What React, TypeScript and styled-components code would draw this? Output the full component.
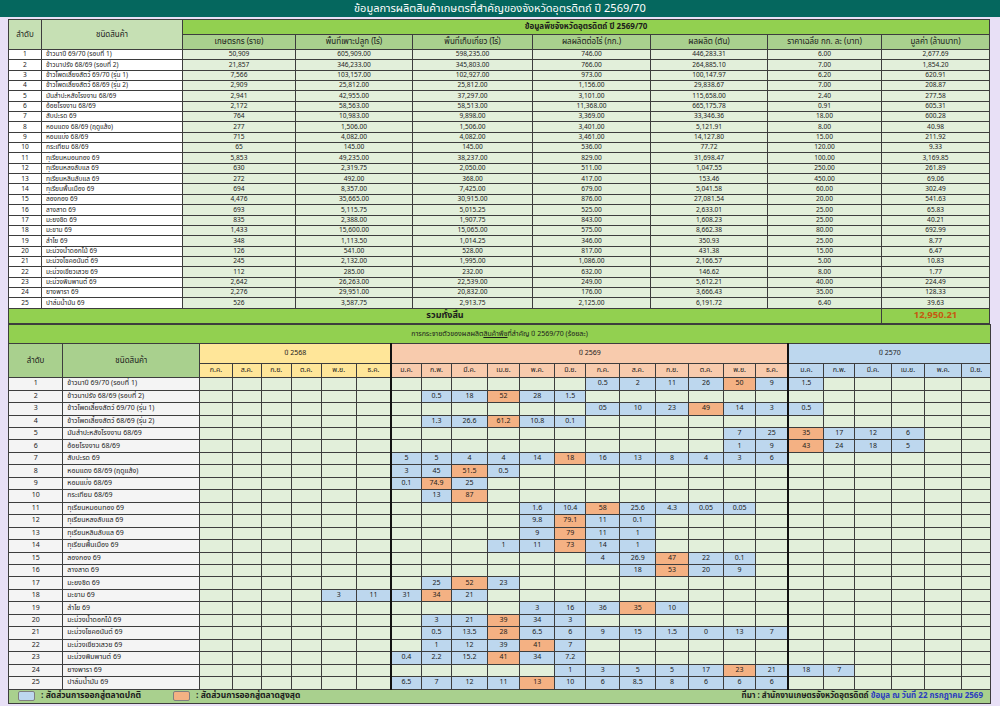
import React from 'react';
import styled, { createGlobalStyle } from 'styled-components';

const FONT = `Tahoma, "Noto Sans Thai", "Leelawadee UI", "Liberation Sans", "DejaVu Sans", sans-serif`;

const Global = createGlobalStyle`
  html, body { margin: 0; padding: 0; background: #e8e0f6; }
  body { font-family: ${FONT}; color: #1c1c1c; }
`;

const Page = styled.div`
  width: 1000px;
  height: 706px;
  overflow: hidden;
  display: flex;
  flex-direction: column;
  background: #e8e0f6;
`;

const TitleBar = styled.header`
  height: 17px;
  flex: none;
  background: #05675e;
  color: #fff;
  font-size: 11px;
  font-weight: 400;
  display: flex;
  align-items: center;
  justify-content: center;
  line-height: 1;
`;

const Content = styled.main`
  padding: 2px 10px 0 8px;
  display: flex;
  flex-direction: column;
`;

const Table = styled.table<{ $w: number; $fs: number }>`
  width: ${(p) => p.$w}px;
  table-layout: fixed;
  border-collapse: collapse;
  font-size: ${(p) => p.$fs}px;
  line-height: 1;
`;

const Cell = styled.td<{ $bg?: string; $align?: string; $bold?: boolean; $thick?: boolean; $fs?: number }>`
  border: 1px solid #3d3d3d;
  ${(p) => (p.$thick ? 'border-left: 2px solid #111;' : '')}
  background: ${(p) => p.$bg || 'transparent'};
  text-align: ${(p) => p.$align || 'center'};
  font-weight: ${(p) => (p.$bold ? 700 : 400)};
  ${(p) => (p.$fs ? `font-size: ${p.$fs}px;` : '')}
  padding: ${(p) => (p.$align === 'left' ? '0 0 0 4px' : '0')};
  white-space: nowrap;
  overflow: hidden;
  vertical-align: middle;
`;

const Row = styled.tr<{ $h: number }>`
  height: ${(p) => p.$h}px;
`;

const TotalValue = styled.span`
  color: #c55a11;
  font-size: 9.5px;
  font-weight: 700;
`;

const Underline = styled.span`
  text-decoration: underline;
`;

const LegendBar = styled.div`
  display: flex;
  align-items: center;
  height: 100%;
  padding: 0 7px 0 9px;
  font-size: 8.5px;
  font-weight: 700;
`;

const LegendItem = styled.div`
  display: flex;
  align-items: center;
  gap: 6px;
  margin-right: 32px;
`;

const Swatch = styled.span<{ $c: string }>`
  display: inline-block;
  width: 15px;
  height: 8px;
  border-radius: 2px;
  border: 1px solid #7f7f7f;
  background: ${(p) => p.$c};
`;

const Source = styled.div`
  margin-left: auto;
  font-size: 8px;
`;

const Blue = styled.span`
  color: #2c3cc0;
`;

const names = [
  'ข้าวนาปี 69/70 (รอบที่ 1)',
  'ข้าวนาปรัง 68/69 (รอบที่ 2)',
  'ข้าวโพดเลี้ยงสัตว์ 69/70 (รุ่น 1)',
  'ข้าวโพดเลี้ยงสัตว์ 68/69 (รุ่น 2)',
  'มันสำปะหลังโรงงาน 68/69',
  'อ้อยโรงงาน 68/69',
  'สับปะรด 69',
  'หอมแดง 68/69 (ฤดูแล้ง)',
  'หอมแบ่ง 68/69',
  'กระเทียม 68/69',
  'ทุเรียนหมอนทอง 69',
  'ทุเรียนหลงลับแล 69',
  'ทุเรียนหลินลับแล 69',
  'ทุเรียนพื้นเมือง 69',
  'ลองกอง 69',
  'ลางสาด 69',
  'มะยงชิด 69',
  'มะขาม 69',
  'ลำไย 69',
  'มะม่วงน้ำดอกไม้ 69',
  'มะม่วงโชคอนันต์ 69',
  'มะม่วงเขียวเสวย 69',
  'มะม่วงพิมพานต์ 69',
  'ยางพารา 69',
  'ปาล์มน้ำมัน 69',
];

const topData: string[][] = [
  ['50,909', '605,909.00', '598,235.00', '746.00', '446,283.31', '6.00', '2,677.69'],
  ['21,857', '346,233.00', '345,803.00', '766.00', '264,885.10', '7.00', '1,854.20'],
  ['7,566', '103,157.00', '102,927.00', '973.00', '100,147.97', '6.20', '620.91'],
  ['2,909', '25,812.00', '25,812.00', '1,156.00', '29,838.67', '7.00', '208.87'],
  ['2,941', '42,955.00', '37,297.00', '3,101.00', '115,658.00', '2.40', '277.58'],
  ['2,172', '58,563.00', '58,513.00', '11,368.00', '665,175.78', '0.91', '605.31'],
  ['764', '10,983.00', '9,898.00', '3,369.00', '33,346.36', '18.00', '600.28'],
  ['277', '1,506.00', '1,506.00', '3,401.00', '5,121.91', '8.00', '40.98'],
  ['715', '4,082.00', '4,082.00', '3,461.00', '14,127.80', '15.00', '211.92'],
  ['65', '145.00', '145.00', '536.00', '77.72', '120.00', '9.33'],
  ['5,853', '49,235.00', '38,237.00', '829.00', '31,698.47', '100.00', '3,169.85'],
  ['630', '2,319.75', '2,050.00', '511.00', '1,047.55', '250.00', '261.89'],
  ['272', '492.00', '368.00', '417.00', '153.46', '450.00', '69.06'],
  ['694', '8,357.00', '7,425.00', '679.00', '5,041.58', '60.00', '302.49'],
  ['4,476', '35,665.00', '30,915.00', '876.00', '27,081.54', '20.00', '541.63'],
  ['693', '5,115.75', '5,015.25', '525.00', '2,633.01', '25.00', '65.83'],
  ['835', '2,388.00', '1,907.75', '843.00', '1,608.23', '25.00', '40.21'],
  ['1,433', '15,600.00', '15,065.00', '575.00', '8,662.38', '80.00', '692.99'],
  ['348', '1,113.50', '1,014.25', '346.00', '350.93', '25.00', '8.77'],
  ['126', '541.00', '528.00', '817.00', '431.38', '15.00', '6.47'],
  ['245', '2,132.00', '1,995.00', '1,086.00', '2,166.57', '5.00', '10.83'],
  ['112', '285.00', '232.00', '632.00', '146.62', '8.00', '1.77'],
  ['2,642', '26,263.00', '22,539.00', '249.00', '5,612.21', '40.00', '224.49'],
  ['2,276', '29,951.00', '20,832.00', '176.00', '3,666.43', '35.00', '128.33'],
  ['526', '3,587.75', '2,913.75', '2,125.00', '6,191.72', '6.40', '39.63'],
];

const topHeads = [
  'เกษตรกร (ราย)',
  'พื้นที่เพาะปลูก (ไร่)',
  'พื้นที่เก็บเกี่ยว (ไร่)',
  'ผลผลิตต่อไร่ (กก.)',
  'ผลผลิต (ตัน)',
  'ราคาเฉลี่ย กก. ละ (บาท)',
  'มูลค่า (ล้านบาท)',
];
const topCols = [33, 141, 113, 117, 120, 118, 117, 114, 108];

// distribution: "col:value" with * for peak
const dist: string[] = [
  '12:0.5 13:2 14:11 15:26 16:50* 17:9 18:1.5',
  '7:0.5 8:18 9:52* 10:28 11:1.5',
  '12:05 13:10 14:23 15:49* 16:14 17:3 18:0.5',
  '7:1.3 8:26.6 9:61.2* 10:10.8 11:0.1',
  '16:7 17:25 18:35* 19:17 20:12 21:6',
  '16:1 17:9 18:43* 19:24 20:18 21:5',
  '6:5 7:5 8:4 9:4 10:14 11:18* 12:16 13:13 14:8 15:4 16:3 17:6',
  '6:3 7:45 8:51.5* 9:0.5',
  '6:0.1 7:74.9* 8:25',
  '7:13 8:87*',
  '10:1.6 11:10.4 12:58* 13:25.6 14:4.3 15:0.05 16:0.05',
  '10:9.8 11:79.1* 12:11 13:0.1',
  '10:9 11:79* 12:11 13:1',
  '9:1 10:11 11:73* 12:14 13:1',
  '12:4 13:26.9 14:47* 15:22 16:0.1',
  '13:18 14:53* 15:20 16:9',
  '7:25 8:52* 9:23',
  '4:3 5:11 6:31 7:34* 8:21',
  '10:3 11:16 12:36 13:35* 14:10',
  '7:3 8:21 9:39* 10:34 11:3',
  '7:0.5 8:13.5 9:28* 10:6.5 11:6 12:9 13:15 14:1.5 15:0 16:13 17:7',
  '7:1 8:12 9:39 10:41* 11:7',
  '6:0.4 7:2.2 8:15.2 9:41* 10:34 11:7.2',
  '11:1 12:3 13:5 14:5 15:17 16:23* 17:21 18:18 19:7',
  '6:6.5 7:7 8:12 9:11 10:13* 11:10 12:6 13:8.5 14:8 15:6 16:6 17:6',
];

const parseDist = (s: string) => {
  const m: Record<number, { v: string; peak: boolean }> = {};
  s.split(' ').forEach((tok) => {
    const [c, v] = tok.split(':');
    m[Number(c)] = { v: v.replace('*', ''), peak: v.endsWith('*') };
  });
  return m;
};

const m6a = ['ก.ค.', 'ส.ค.', 'ก.ย.', 'ต.ค.', 'พ.ย.', 'ธ.ค.'];
const m6b = ['ม.ค.', 'ก.พ.', 'มี.ค.', 'เม.ย.', 'พ.ค.', 'มิ.ย.'];
const months = [...m6a, ...m6b, ...m6a, ...m6b];
const monthBg = (i: number) => (i < 6 ? '#ffe699' : i < 18 ? '#f8cbad' : '#bdd7ee');
const botCols = [
  54.3, 137,
  32.4, 29, 30, 30, 35, 35,
  30, 30.6, 35.4, 32.6, 35, 31, 34, 36, 32.7, 35, 32.3, 32.7,
  35.3, 31, 36.4, 33.6, 37, 28.7,
];

const TopTable = () => (
  <Table $w={981} $fs={6.6}>
    <colgroup>
      {topCols.map((w, i) => (
        <col key={i} style={{ width: w }} />
      ))}
    </colgroup>
    <thead>
      <Row $h={15}>
        <Cell as="th" rowSpan={2} $bg="#c6e0b4" $fs={8}>ลำดับ</Cell>
        <Cell as="th" rowSpan={2} $bg="#c6e0b4" $fs={8}>ชนิดสินค้า</Cell>
        <Cell as="th" colSpan={7} $bg="#92d050" $bold $fs={8}>ข้อมูลพืชจังหวัดอุตรดิตถ์ ปี 2569/70</Cell>
      </Row>
      <Row $h={15}>
        {topHeads.map((h) => (
          <Cell as="th" key={h} $bg="#a9d08e" $fs={8}>{h}</Cell>
        ))}
      </Row>
    </thead>
    <tbody>
      {topData.map((r, i) => (
        <Row $h={10.35} key={i}>
          <Cell $bg="#fff">{i + 1}</Cell>
          <Cell $bg="#fff" $align="left">{names[i]}</Cell>
          {r.map((v, j) => (
            <Cell key={j} $bg="#e2efda">{v}</Cell>
          ))}
        </Row>
      ))}
      <Row $h={15.6}>
        <Cell colSpan={8} $bg="#92d050" $bold $fs={9}>รวมทั้งสิ้น</Cell>
        <Cell $bg="#92d050"><TotalValue>12,950.21</TotalValue></Cell>
      </Row>
    </tbody>
  </Table>
);

const BottomTable = () => (
  <Table $w={982} $fs={7}>
    <colgroup>
      {botCols.map((w, i) => (
        <col key={i} style={{ width: w }} />
      ))}
    </colgroup>
    <thead>
      <Row $h={19}>
        <Cell as="th" colSpan={26} $bg="#92d050">
          การกระจายตัวของผลผลิต<Underline>สินค้าพืช</Underline>ที่สำคัญ ปี 2569/70 (ร้อยละ)
        </Cell>
      </Row>
      <Row $h={19.5}>
        <Cell as="th" rowSpan={2} $bg="#a9d08e" $fs={8}>ลำดับ</Cell>
        <Cell as="th" rowSpan={2} $bg="#a9d08e" $fs={8}>ชนิดสินค้า</Cell>
        <Cell as="th" colSpan={6} $bg="#ffe699">ปี 2568</Cell>
        <Cell as="th" colSpan={12} $bg="#f8cbad" $thick>ปี 2569</Cell>
        <Cell as="th" colSpan={6} $bg="#bdd7ee" $thick>ปี 2570</Cell>
      </Row>
      <Row $h={14.5}>
        {months.map((m, i) => (
          <Cell as="th" key={i} $bg={monthBg(i)} $thick={i === 6 || i === 18}>
            {m}
          </Cell>
        ))}
      </Row>
    </thead>
    <tbody>
      {dist.map((s, i) => {
        const d = parseDist(s);
        return (
          <Row $h={12.46} key={i}>
            <Cell $bg="#f4f4f4">{i + 1}</Cell>
            <Cell $bg="#f4f4f4" $align="left">{names[i]}</Cell>
            {months.map((_, c) => {
              const e = d[c];
              const bg = e ? (e.peak ? '#f4b183' : '#bdd7ee') : '#e2efda';
              return (
                <Cell key={c} $bg={bg} $thick={c === 6 || c === 18}>
                  {e ? e.v : ''}
                </Cell>
              );
            })}
          </Row>
        );
      })}
    </tbody>
    <tfoot>
      <Row $h={14.5}>
        <Cell colSpan={26} $bg="#a9d08e">
          <LegendBar>
            <LegendItem>
              <Swatch $c="#bdd7ee" />
              <span>: สัดส่วนการออกสู่ตลาดปกติ</span>
            </LegendItem>
            <LegendItem>
              <Swatch $c="#f4b183" />
              <span>: สัดส่วนการออกสู่ตลาดสูงสุด</span>
            </LegendItem>
            <Source>
              ที่มา : สำนักงานเกษตรจังหวัดอุตรดิตถ์ <Blue>ข้อมูล ณ วันที่ 22 กรกฎาคม 2569</Blue>
            </Source>
          </LegendBar>
        </Cell>
      </Row>
    </tfoot>
  </Table>
);

export default function App() {
  return (
    <Page>
      <Global />
      <TitleBar>ข้อมูลการผลิตสินค้าเกษตรที่สำคัญของจังหวัดอุตรดิตถ์ ปี 2569/70</TitleBar>
      <Content>
        <TopTable />
        <BottomTable />
      </Content>
    </Page>
  );
}
